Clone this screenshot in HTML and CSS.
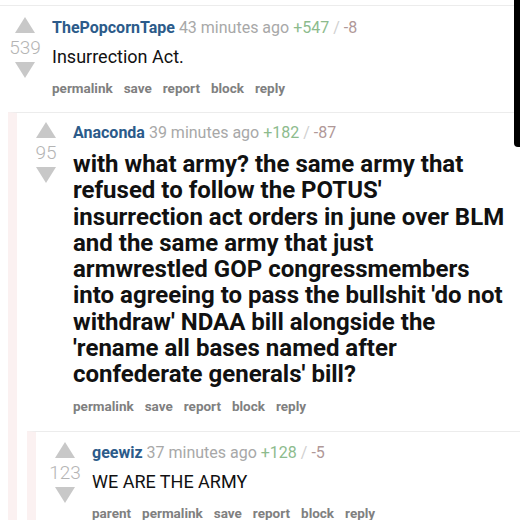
FILE: index.html
```html
<!DOCTYPE html>
<html>
<head>
<meta charset="utf-8">
<link rel="stylesheet" href="styles.css">
</head>
<body>
<div class="page">
  <div class="comment top">
    <div class="row">
      <div class="vote">
        <svg class="arrow" viewBox="0 0 20 16"><polygon points="10,0 20,16 0,16"/></svg>
        <div class="score">539</div>
        <svg class="arrow" viewBox="0 0 20 16"><polygon points="0,0 20,0 10,16"/></svg>
      </div>
      <div class="main">
        <div class="meta"><span class="user">ThePopcornTape</span> <span class="time">43 minutes ago</span> <span class="up">+547</span> <span class="slash">/</span> <span class="down">-8</span></div>
        <div class="body">Insurrection Act.</div>
        <div class="links"><span>permalink</span><span>save</span><span>report</span><span>block</span><span>reply</span></div>
      </div>
    </div>
    <div class="comment child second">
      <div class="row">
        <div class="vote">
          <svg class="arrow" viewBox="0 0 20 16"><polygon points="10,0 20,16 0,16"/></svg>
          <div class="score">95</div>
          <svg class="arrow" viewBox="0 0 20 16"><polygon points="0,0 20,0 10,16"/></svg>
        </div>
        <div class="main">
          <div class="meta"><span class="user">Anaconda</span> <span class="time">39 minutes ago</span> <span class="up">+182</span> <span class="slash">/</span> <span class="down">-87</span></div>
          <div class="body bold">with what army? the same army that refused to follow the POTUS' insurrection act orders in june over BLM and the same army that just armwrestled GOP congressmembers into agreeing to pass the bullshit 'do not withdraw' NDAA bill alongside the 'rename all bases named after confederate generals' bill?</div>
          <div class="links"><span>permalink</span><span>save</span><span>report</span><span>block</span><span>reply</span></div>
        </div>
      </div>
      <div class="comment child third">
        <div class="row">
          <div class="vote">
            <svg class="arrow" viewBox="0 0 20 16"><polygon points="10,0 20,16 0,16"/></svg>
            <div class="score">123</div>
            <svg class="arrow" viewBox="0 0 20 16"><polygon points="0,0 20,0 10,16"/></svg>
          </div>
          <div class="main">
            <div class="meta"><span class="user">geewiz</span> <span class="time">37 minutes ago</span> <span class="up">+128</span> <span class="slash">/</span> <span class="down">-5</span></div>
            <div class="body">WE ARE THE ARMY</div>
            <div class="links"><span>parent</span><span>permalink</span><span>save</span><span>report</span><span>block</span><span>reply</span></div>
          </div>
        </div>
      </div>
    </div>
  </div>
  <div class="edge"></div>
</div>
</body>
</html>
```

FILE: styles.css
```css
html, body {
  margin: 0;
  padding: 0;
  background: #fff;
}
body {
  font-family: Roboto, "Liberation Sans", sans-serif;
  width: 520px;
  height: 520px;
  overflow: hidden;
}
.page {
  position: relative;
  padding-top: 5px;
}
.comment {
  border-top: 1px solid #ececec;
}
.child {
  border-left: 9px solid #fbf1f1;
}
.second {
  margin-left: 8px;
}
.third {
  margin-left: 10px;
}
.row {
  display: flex;
  padding-top: 10px;
  padding-bottom: 15px;
}
.top > .row {
  padding-left: 10px;
}
.second > .row {
  padding-left: 14px;
  padding-top: 8px;
  padding-bottom: 16px;
}
.third > .row {
  padding-left: 14px;
  padding-top: 9px;
}
.vote {
  width: 30px;
  display: flex;
  flex-direction: column;
  align-items: center;
  padding-top: 1px;
  margin-right: 12px;
}
.arrow {
  width: 20px;
  height: 16px;
  fill: #c8c8c8;
  display: block;
  flex: none;
}
.score {
  font-size: 19px;
  font-weight: 300;
  color: #b4b4b4;
  line-height: 20px;
  margin: 5px 0 4px;
}
.main {
  flex: 1;
  min-width: 0;
}
.meta {
  font-size: 16px;
  line-height: 20px;
  padding-top: 2px;
  color: #a8a8a8;
  white-space: nowrap;
}
.user {
  font-weight: bold;
  color: #2c5b8a;
}
.up {
  color: #8dbb8d;
}
.slash {
  color: #d0d0d0;
}
.down {
  color: #b09898;
}
.body {
  font-size: 18px;
  line-height: 26px;
  color: #111;
  margin-top: 6px;
}
.body.bold {
  font-size: 24px;
  font-weight: bold;
  line-height: 26.3px;
  margin-top: 8px;
  margin-bottom: 8px;
  padding-right: 10px;
}
.links {
  margin-top: 9px;
  font-size: 13.5px;
  font-weight: bold;
  line-height: 18px;
  color: #808080;
  display: flex;
  gap: 11px;
}
.edge {
  position: absolute;
  top: 0;
  right: 0;
  width: 6px;
  height: 147px;
  background: #000;
  border-bottom-left-radius: 4px;
}
```
